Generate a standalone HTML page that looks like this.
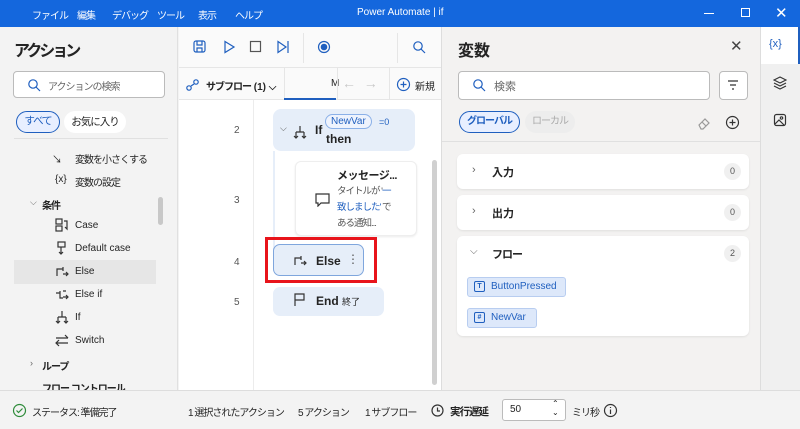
<!DOCTYPE html>
<html><head><meta charset="utf-8"><style>
*{box-sizing:border-box;margin:0;padding:0}
body{width:800px;height:429px;overflow:hidden;font-family:"Liberation Sans","Noto Sans CJK JP",sans-serif;font-size:11px;color:#242424;background:#f3f3f3;position:relative}
.a{position:absolute}
.t{white-space:nowrap}
.j{letter-spacing:-1px}
svg{position:absolute;fill:none;stroke:#333;stroke-width:1.2}
</style></head><body>
<!-- title bar -->
<div class="a" style="left:0;top:0;width:800px;height:27px;background:#1467dd;color:#fff;">
<div class="a t j" style="left:32px;top:7px;font-size:10px">ファイル</div>
<div class="a t j" style="left:77px;top:7px;font-size:10px">編集</div>
<div class="a t j" style="left:112px;top:7px;font-size:10px">デバッグ</div>
<div class="a t j" style="left:157px;top:7px;font-size:10px">ツール</div>
<div class="a t j" style="left:198px;top:7px;font-size:10px">表示</div>
<div class="a t j" style="left:235px;top:7px;font-size:10px">ヘルプ</div>
<div class="a t" style="left:357px;top:7px;font-size:10px">Power Automate | if</div>
<div class="a" style="left:704px;top:13px;width:10px;height:1px;background:#fff"></div>
<div class="a" style="left:741px;top:8px;width:9px;height:9px;border:1px solid #fff"></div>
<div class="a t" style="left:775px;top:4px;font-size:15px">✕</div>
</div>
<!-- left panel -->
<div class="a" style="left:0;top:27px;width:178px;height:363px;background:#f3f3f3;border-right:1px solid #e0e0e0">
<div class="a t" style="left:14px;top:10px;font-size:16px;font-weight:bold;letter-spacing:-3px">アクション</div>
<div class="a" style="left:13px;top:44px;width:152px;height:27px;background:#fff;border:1px solid #bbb;border-radius:4px"></div>
<svg style="left:27px;top:51px" width="14" height="14"><circle cx="6" cy="6" r="4.2" stroke="#1f5fbf"/><path d="M9 9l4 4" stroke="#1f5fbf"/></svg>
<div class="a t j" style="left:48px;top:51px;font-size:10px;color:#666">アクションの検索</div>
<div class="a t j" style="left:16px;top:84px;width:44px;height:22px;border:1.5px solid #1f5fbf;border-radius:11px;background:#e8efff;color:#1f5fbf;text-align:center;line-height:19px;font-size:10.5px">すべて</div>
<div class="a t j" style="left:64px;top:84px;width:62px;height:22px;border-radius:11px;background:#fff;text-align:center;line-height:22px;font-size:10.5px">お気に入り</div>
<div class="a" style="left:14px;top:111px;width:154px;height:1px;background:#e0e0e0"></div>
<div class="a t" style="left:52px;top:124px;font-size:10px">↘</div><div class="a t j" style="left:75px;top:124px;font-size:10px">変数を小さくする</div>
<div class="a t" style="left:55px;top:147px;font-size:10px">{x}</div><div class="a t j" style="left:75px;top:147px;font-size:10px">変数の設定</div>
<div class="a t" style="left:30px;top:170px;font-size:9px;color:#666">⌵</div><div class="a t j" style="left:42px;top:170px;font-size:10px;font-weight:bold">条件</div>
<div class="a" style="left:158px;top:170px;width:5px;height:28px;background:#c8c8c8;border-radius:3px"></div>
<div class="a t" style="left:75px;top:193px;font-size:10px">Case</div>
<div class="a t" style="left:75px;top:216px;font-size:10px">Default case</div>
<div class="a" style="left:14px;top:233px;width:142px;height:24px;background:#e6e6e6"></div>
<div class="a t" style="left:75px;top:239px;font-size:10px">Else</div>
<div class="a t" style="left:75px;top:262px;font-size:10px">Else if</div>
<div class="a t" style="left:75px;top:285px;font-size:10px">If</div>
<div class="a t" style="left:75px;top:308px;font-size:10px">Switch</div>
<svg style="left:55px;top:191px" width="14" height="14"><rect x="1" y="1" width="6" height="5"/><rect x="1" y="8" width="6" height="5"/><path d="M9 3h3v8l-2-2"/></svg>
<svg style="left:55px;top:214px" width="14" height="14"><rect x="3" y="1" width="7" height="5"/><path d="M6 6v7M4 11l2 2 2-2"/></svg>
<svg style="left:55px;top:237px" width="14" height="14"><path d="M2 12V5h6M8 3v4M8 10h5M11 8l2 2-2 2"/></svg>
<svg style="left:55px;top:260px" width="14" height="14"><path d="M1 6h4M5 4v7h3M8 4h3M8 10h5M11 8l2 2-2 2"/></svg>
<svg style="left:55px;top:283px" width="14" height="14"><path d="M7 1v6M3 7h8M3 7v6M11 7v6M1 11l2 2 2-2M9 11l2 2 2-2"/></svg>
<svg style="left:55px;top:306px" width="14" height="14"><path d="M1 5h12M10 2l3 3M1 10h12M4 7l-3 3 3 3"/></svg>
<div class="a t" style="left:30px;top:331px;font-size:9px;color:#666">›</div><div class="a t j" style="left:42px;top:331px;font-size:10px;font-weight:bold">ループ</div>
<div class="a t j" style="left:42px;top:353px;font-size:10px;font-weight:bold">フロー コントロール</div>
</div>
<!-- middle -->
<div class="a" style="left:179px;top:27px;width:262px;height:363px;background:#fff">
<div class="a" style="left:0;top:0;width:262px;height:41px;background:#fafafa;border-bottom:1px solid #e6e6e6"></div>
<svg style="left:14px;top:13px" width="14" height="14" stroke="#1f5fbf"><rect x="1" y="1" width="11" height="11" rx="2" stroke="#1f5fbf"/><path d="M4 1v4h5V1M4 12V8h5v4" stroke="#1f5fbf"/></svg>
<svg style="left:43px;top:13px" width="14" height="14"><path d="M3 1.5l9 5.5-9 5.5z" stroke="#1f5fbf"/></svg>
<svg style="left:70px;top:13px" width="14" height="14"><rect x="1.5" y="1.5" width="10" height="10" stroke="#555"/></svg>
<svg style="left:97px;top:13px" width="14" height="14"><path d="M2 1.5l8 5.5-8 5.5zM12 1v12" stroke="#1f5fbf"/></svg>
<div class="a" style="left:124px;top:6px;width:1px;height:30px;background:#e6e6e6"></div>
<svg style="left:138px;top:13px" width="14" height="14"><circle cx="7" cy="7" r="5.5" stroke="#1f5fbf"/><circle cx="7" cy="7" r="3.3" fill="#1f5fbf" stroke="none"/></svg>
<div class="a" style="left:218px;top:6px;width:1px;height:30px;background:#e6e6e6"></div>
<svg style="left:233px;top:13px" width="14" height="14"><circle cx="6" cy="6" r="4.2" stroke="#1f5fbf"/><path d="M9 9l4 4" stroke="#1f5fbf"/></svg>
<div class="a" style="left:0;top:41px;width:262px;height:32px;background:#fafafa;border-bottom:1px solid #e6e6e6"></div>
<svg style="left:7px;top:51px" width="14" height="14"><circle cx="3" cy="10" r="2.2" stroke="#1f5fbf"/><circle cx="10" cy="4" r="2.2" stroke="#1f5fbf"/><path d="M5 8l3-2" stroke="#1f5fbf"/></svg>
<div class="a t" style="left:27px;top:51px;font-size:10px;font-weight:bold"><span class="j">サブフロー</span> (1) ⌵</div>
<div class="a" style="left:105px;top:41px;width:1px;height:32px;background:#e6e6e6"></div>
<div class="a t" style="left:152px;top:51px;font-size:10px">M</div>
<div class="a" style="left:105px;top:71px;width:52px;height:2px;background:#1f5fbf"></div>
<div class="a" style="left:158px;top:41px;width:1px;height:32px;background:#e6e6e6"></div>
<div class="a t" style="left:163px;top:48px;font-size:14px;color:#c8c8c8">←&nbsp; →</div>
<div class="a" style="left:210px;top:41px;width:1px;height:32px;background:#e6e6e6"></div>
<svg style="left:217px;top:50px" width="15" height="15"><circle cx="7.5" cy="7.5" r="6" stroke="#1f5fbf"/><path d="M7.5 4.5v6M4.5 7.5h6" stroke="#1f5fbf"/></svg>
<div class="a t" style="left:236px;top:51px;font-size:10px">新規</div>
<div class="a" style="left:74px;top:73px;width:1px;height:290px;background:#ececec"></div>
<div class="a t" style="left:55px;top:98px;font-size:10px;color:#555">2</div>
<div class="a t" style="left:55px;top:168px;font-size:10px;color:#555">3</div>
<div class="a t" style="left:55px;top:230px;font-size:10px;color:#555">4</div>
<div class="a t" style="left:55px;top:270px;font-size:10px;color:#555">5</div>
<div class="a" style="left:94px;top:82px;width:142px;height:42px;background:#e6eef9;border-radius:8px"></div>
<div class="a t" style="left:101px;top:96px;font-size:9px;color:#555">⌵</div>
<svg style="left:114px;top:98px" width="14" height="14"><path d="M7 1v6M3 7h8M3 7v6M11 7v6M1 11l2 2 2-2M9 11l2 2 2-2"/></svg>
<div class="a t" style="left:136px;top:96px;font-size:12px;font-weight:bold">If</div>
<div class="a t" style="left:146px;top:87px;height:15px;padding:0 5px;border:1px solid #8ab0e8;border-radius:8px;background:#eef3fd;color:#1f5fbf;font-size:10px;line-height:13px">NewVar</div>
<div class="a t" style="left:200px;top:90px;font-size:9px;color:#1f5fbf">=0</div>
<div class="a t" style="left:147px;top:105px;font-size:12px;font-weight:bold">then</div>
<div class="a" style="left:94px;top:124px;width:2px;height:100px;background:#e6eef9"></div>
<div class="a" style="left:116px;top:134px;width:122px;height:75px;background:#fff;border:1px solid #eee;border-radius:6px;box-shadow:0 1px 2px rgba(0,0,0,.08)"></div>
<svg style="left:136px;top:166px" width="15" height="14"><path d="M1 1h13v9H6l-3 3v-3H1z"/></svg>
<div class="a t" style="left:158px;top:140px;font-size:11px;font-weight:bold;letter-spacing:-0.5px">メッセージ...</div>
<div class="a t j" style="left:158px;top:156px;font-size:9.5px;color:#555">タイトルが '<span style="color:#1f5fbf">一</span></div>
<div class="a t j" style="left:158px;top:172px;font-size:9.5px;color:#1f5fbf">致しました' <span style="color:#555">で</span></div>
<div class="a t j" style="left:158px;top:188px;font-size:9.5px;color:#555">ある通知...</div>
<div class="a" style="left:86px;top:210px;width:112px;height:46px;border:3px solid #e8141b"></div>
<div class="a" style="left:94px;top:217px;width:91px;height:32px;background:#e6eef9;border:1.5px solid #7fa6dd;border-radius:7px"></div>
<svg style="left:114px;top:226px" width="14" height="14"><path d="M2 12V5h6M8 3v4M8 10h5M11 8l2 2-2 2"/></svg>
<div class="a t" style="left:137px;top:227px;font-size:12px;font-weight:bold">Else</div>
<div class="a t" style="left:168px;top:225px;font-size:12px;color:#555">⋮</div>
<div class="a" style="left:94px;top:260px;width:111px;height:29px;background:#e6eef9;border-radius:7px"></div>
<svg style="left:114px;top:266px" width="14" height="14"><path d="M2 13V1h9v6H2"/></svg>
<div class="a t" style="left:137px;top:267px;font-size:12px;font-weight:bold">End <span style="font-size:9px;font-weight:normal">終了</span></div>
<div class="a" style="left:253px;top:133px;width:5px;height:225px;background:#d0d0d0;border-radius:3px"></div>
</div>
<!-- right panel -->
<div class="a" style="left:441px;top:27px;width:319px;height:363px;background:#f3f2f1;border-left:1px solid #ddd">
<div class="a t" style="left:16px;top:10px;font-size:16px;font-weight:bold">変数</div>
<div class="a t" style="left:288px;top:10px;font-size:15px;color:#444">✕</div>
<div class="a" style="left:16px;top:44px;width:252px;height:29px;background:#fff;border:1px solid #bbb;border-radius:4px"></div>
<svg style="left:30px;top:51px" width="14" height="14"><circle cx="6" cy="6" r="4.2" stroke="#1f5fbf"/><path d="M9 9l4 4" stroke="#1f5fbf"/></svg>
<div class="a t" style="left:52px;top:51px;font-size:11px;color:#666">検索</div>
<div class="a" style="left:277px;top:44px;width:29px;height:29px;background:#fff;border:1px solid #bbb;border-radius:4px"></div>
<svg style="left:284px;top:52px" width="14" height="12"><path d="M2 2h10M4 6h6M6 10h2"/></svg>
<div class="a t j" style="left:17px;top:84px;width:61px;height:22px;border:1.5px solid #1f5fbf;border-radius:11px;background:#e8efff;color:#1f5fbf;text-align:center;line-height:19px;font-size:10px;font-weight:bold">グローバル</div>
<div class="a t j" style="left:83px;top:84px;width:50px;height:22px;border-radius:11px;background:#ededed;color:#aaa;text-align:center;line-height:22px;font-size:10px">ローカル</div>
<svg style="left:255px;top:89px" width="14" height="14"><path d="M2 9l6-6 4 4-6 6H4zM5 6l4 4" stroke="#999"/></svg>
<svg style="left:283px;top:88px" width="15" height="15"><circle cx="7.5" cy="7.5" r="6"/><path d="M7.5 4.5v6M4.5 7.5h6"/></svg>
<div class="a" style="left:0;top:114px;width:319px;height:1px;background:#e0e0e0"></div>
<div class="a" style="left:15px;top:127px;width:292px;height:35px;background:#fff;border-radius:6px;box-shadow:0 1px 2px rgba(0,0,0,.08)"></div>
<div class="a t" style="left:30px;top:137px;font-size:11px;color:#666">›</div><div class="a t" style="left:50px;top:137px;font-size:11px;font-weight:bold">入力</div>
<div class="a" style="left:282px;top:136px;width:17px;height:17px;border-radius:9px;background:#f0f0f0;font-size:9px;text-align:center;line-height:17px;color:#555">0</div>
<div class="a" style="left:15px;top:168px;width:292px;height:35px;background:#fff;border-radius:6px;box-shadow:0 1px 2px rgba(0,0,0,.08)"></div>
<div class="a t" style="left:30px;top:178px;font-size:11px;color:#666">›</div><div class="a t" style="left:50px;top:178px;font-size:11px;font-weight:bold">出力</div>
<div class="a" style="left:282px;top:177px;width:17px;height:17px;border-radius:9px;background:#f0f0f0;font-size:9px;text-align:center;line-height:17px;color:#555">0</div>
<div class="a" style="left:15px;top:209px;width:292px;height:100px;background:#fff;border-radius:6px;box-shadow:0 1px 2px rgba(0,0,0,.08)"></div>
<div class="a t" style="left:28px;top:219px;font-size:10px;color:#666">⌵</div><div class="a t j" style="left:50px;top:219px;font-size:11px;font-weight:bold">フロー</div>
<div class="a" style="left:282px;top:218px;width:17px;height:17px;border-radius:9px;background:#f0f0f0;font-size:9px;text-align:center;line-height:17px;color:#555">2</div>
<div class="a t" style="left:25px;top:250px;width:99px;height:20px;background:#dde8fa;border:1px solid #b8cdf0;border-radius:3px;color:#1f5fbf;font-size:10px;line-height:18px;padding-left:23px">ButtonPressed</div>
<div class="a" style="left:32px;top:254px;width:11px;height:11px;border:1.3px solid #1f5fbf;border-radius:2px;font-size:7px;color:#1f5fbf;text-align:center;line-height:9px;font-weight:bold">T</div>
<div class="a t" style="left:25px;top:281px;width:70px;height:20px;background:#dde8fa;border:1px solid #b8cdf0;border-radius:3px;color:#1f5fbf;font-size:10px;line-height:18px;padding-left:23px">NewVar</div>
<div class="a" style="left:32px;top:285px;width:11px;height:11px;border:1.3px solid #1f5fbf;border-radius:2px;font-size:7px;color:#1f5fbf;text-align:center;line-height:9px;font-weight:bold">#</div>
</div>
<!-- icon strip -->
<div class="a" style="left:760px;top:27px;width:40px;height:363px;background:#f0f0f0;border-left:1px solid #ddd">
<div class="a" style="left:0;top:0;width:37px;height:37px;background:#fff"></div>
<div class="a" style="left:37px;top:0;width:3px;height:37px;background:#1f5fbf"></div>
<div class="a t" style="left:8px;top:11px;font-size:11px;color:#1f5fbf">{x}</div>
<svg style="left:12px;top:49px" width="14" height="14"><path d="M7 1l6 3-6 3-6-3zM1 7l6 3 6-3M1 10l6 3 6-3"/></svg>
<svg style="left:12px;top:86px" width="14" height="14"><rect x="1.5" y="1.5" width="11" height="11" rx="2"/><circle cx="8.5" cy="5" r="1.2"/><path d="M2 11l4-4 5 5"/></svg>
</div>
<!-- status bar -->
<div class="a" style="left:0;top:390px;width:800px;height:39px;background:#f3f3f3;border-top:1px solid #ddd">
<svg style="left:12px;top:12px" width="15" height="15"><circle cx="7.5" cy="7.5" r="6" stroke="#2e8b3a"/><path d="M4.5 7.5l2 2 4-4" stroke="#2e8b3a"/></svg>
<div class="a t j" style="left:32px;top:13px;font-size:10px">ステータス: 準備完了</div>
<div class="a t j" style="left:188px;top:13px;font-size:10px">1 選択されたアクション</div>
<div class="a t j" style="left:298px;top:13px;font-size:10px">5 アクション</div>
<div class="a t j" style="left:365px;top:13px;font-size:10px">1 サブフロー</div>
<svg style="left:430px;top:12px" width="15" height="15"><circle cx="7.5" cy="7.5" r="5.5"/><path d="M7.5 4.5v3.5h2.5"/></svg>
<div class="a t j" style="left:450px;top:13px;font-size:10.5px;font-weight:bold">実行遅延</div>
<div class="a" style="left:502px;top:8px;width:64px;height:22px;background:#fff;border:1px solid #bbb;border-radius:3px"></div>
<div class="a t" style="left:510px;top:13px;font-size:10px">50</div>
<div class="a t" style="left:552px;top:8px;font-size:8px;line-height:9px">⌃<br>⌄</div>
<div class="a t j" style="left:572px;top:13px;font-size:10px">ミリ秒</div>
<svg style="left:603px;top:12px" width="15" height="15"><circle cx="7.5" cy="7.5" r="6"/><path d="M7.5 6.5v4.5M7.5 4v1"/></svg>
</div>
</body></html>
